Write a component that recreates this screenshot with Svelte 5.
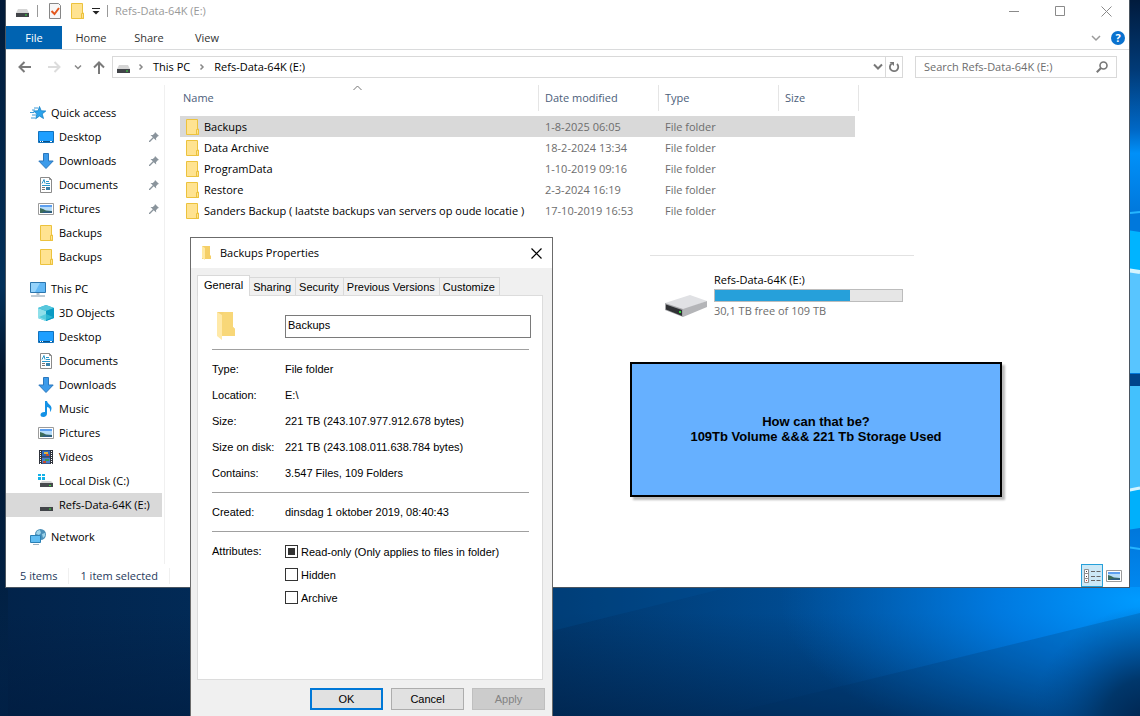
<script>
  let search = $state('')
  let folderName = $state('Backups')
  let hidden = $state(false)
  let archive = $state(false)
  let activeTab = $state('General')
  let selected = $state('Backups')

  const ribbon = ['Home', 'Share', 'View']

  const places = [
    { name: 'Quick access', icon: 'star', root: true },
    { name: 'Desktop', icon: 'desktop', pinned: true },
    { name: 'Downloads', icon: 'down', pinned: true },
    { name: 'Documents', icon: 'doc', pinned: true },
    { name: 'Pictures', icon: 'picture', pinned: true },
    { name: 'Backups', icon: 'folder' },
    { name: 'Backups', icon: 'folder' },
    { name: 'This PC', icon: 'pc', root: true, gap: true },
    { name: '3D Objects', icon: 'cube' },
    { name: 'Desktop', icon: 'desktop' },
    { name: 'Documents', icon: 'doc' },
    { name: 'Downloads', icon: 'down' },
    { name: 'Music', icon: 'music' },
    { name: 'Pictures', icon: 'picture' },
    { name: 'Videos', icon: 'video' },
    { name: 'Local Disk (C:)', icon: 'sysdisk' },
    { name: 'Refs-Data-64K (E:)', icon: 'disk', current: true },
    { name: 'Network', icon: 'network', root: true, gap: true }
  ]

  const files = [
    { name: 'Backups', date: '1-8-2025 06:05' },
    { name: 'Data Archive', date: '18-2-2024 13:34' },
    { name: 'ProgramData', date: '1-10-2019 09:16' },
    { name: 'Restore', date: '2-3-2024 16:19' },
    { name: 'Sanders Backup ( laatste backups van servers op oude locatie )', date: '17-10-2019 16:53' }
  ]

  const tabs = ['General', 'Sharing', 'Security', 'Previous Versions', 'Customize']

  const details = [
    ['Type:', 'File folder'],
    ['Location:', 'E:\\'],
    ['Size:', '221 TB (243.107.977.912.678 bytes)'],
    ['Size on disk:', '221 TB (243.108.011.638.784 bytes)'],
    ['Contains:', '3.547 Files, 109 Folders']
  ]

  const total = 109
  const free = 30.1
  const usedPercent = ((total - free) / total) * 100
</script>

{#snippet icon(name)}
  <svg class="icon" width="16" height="16" viewBox="0 0 16 16" aria-hidden="true">
    {#if name === 'folder'}
      <path d="M2.500 .5h11v9.500h1v5.500h-12z" fill="#ffe391" stroke="#ecc23d" />
      <path d="M12.500 15V10.500h2v5z" fill="#ffe391" stroke="#ecc23d" />
    {:else if name === 'star'}
      <path d="M9.500 1.500l1.700 4.300 4.600.2-3.600 2.900 1.300 4.600-4-2.500-3.800 2.700 1.200-4.700L3.500 6l4.600-.2z" fill="#2ba3ec" stroke="#1482c8" stroke-width=".8" />
      <path d="M4 3h4M2 5h3M0 7.500h4M2 10h4M1 13h4" stroke="#3c9bd8" />
    {:else if name === 'desktop'}
      <path d="M.5 2.500h15v11H.5z" fill="#1e9fff" stroke="#1272bd" />
      <path d="M1 12.500h14" stroke="#0c4f85" />
      <path d="M2 12.500h1M4 12.500h1M12 12.500h2" stroke="#fff" />
    {:else if name === 'down'}
      <path d="M5.500 .5h5v7.500h4.700L8 15.500.8 8h4.700z" fill="#3c9bea" stroke="#2a77bd" />
    {:else if name === 'doc'}
      <path d="M2.500 .5h9l2 2v13h-11z" fill="#fff" stroke="#8a8a8a" />
      <path d="M11.500 .5v2h2" fill="none" stroke="#8a8a8a" />
      <path d="M4 6.500l2-4 1 4M8 4.500h3M8 6.500h4M4 8.500h8" fill="none" stroke="#2a96c9" />
      <path d="M4 10.500h3M4 12.500h3" stroke="#777" />
      <path d="M8 10h4v3H8z" fill="#3b82ab" />
    {:else if name === 'picture'}
      <path d="M.5 2.500h15v11H.5z" fill="#fff" stroke="#9b9b9b" />
      <path d="M2 4h12v8H2z" fill="#b6dcfa" />
      <path d="M2 4h12v2H2z" fill="#5d9ff0" />
      <path d="M2 7l3 1 3 1.500 6 .5v2H2z" fill="#3d6c5b" />
      <path d="M6 10.500h8V12H4z" fill="#2c5c86" />
    {:else if name === 'pc'}
      <path d="M.5 1.500h15v10H.5z" fill="#62b8f5" stroke="#2c76ae" />
      <path d="M1 2h9L5 11H1z" fill="#95d3fb" />
      <path d="M6.500 12h3v2h-3z" fill="#b5c3ce" />
      <path d="M1 15h14" stroke="#7e98ab" />
    {:else if name === 'cube'}
      <path d="M8 0l8 3v10l-8 3-8-3V3z" fill="#1bb3d6" />
      <path d="M0 3l8 3v10l-8-3z" fill="#8fe0ea" />
      <path d="M0 3l8-3 8 3-8 3z" fill="#57c7dc" />
      <path d="M8 6l8-3v10l-8 3z" fill="#0b9bc4" />
      <path d="M1 12l7-3 7 3-7 3z" fill="#3cc3d9" opacity=".7" />
    {:else if name === 'music'}
      <path d="M7 0h2c.5 3 4.500 4 4.500 7 0 1.500-.5 3-1.500 4 .5-3-.5-4.500-3-5v6.500c0 2-1.500 3.500-3.700 3.500-1.800 0-2.800-1-2.800-2.300C2.500 12 4.500 10.800 7 11z" fill="#1492e6" />
    {:else if name === 'video'}
      <path d="M1 1h14v14H1z" fill="#30343c" />
      <path d="M4 1.500h8v6H4z" fill="#2d69bd" />
      <path d="M4 8.500h8v6H4z" fill="#4a7fcf" />
      <path d="M6 3h4v2H6z" fill="#e2b53c" />
      <path d="M8 5h3v2H8zM5 12h3v2H5z" fill="#c64b2e" />
      <path d="M7 10h4v2H7z" fill="#3c9b55" />
      <path d="M2.500 2v13M13.500 2v13" stroke="#fff" stroke-dasharray="1 1" />
    {:else if name === 'sysdisk'}
      <path d="M0 1h3v2H0zM4 1h3v2H4zM0 4h3v3H0zM4 4h3v3H4z" fill="#12b1e8" />
      <path d="M4 8h9l2 2H2z" fill="#d3d3d3" />
      <path d="M2 10h13v4H2z" fill="#474a4e" />
      <path d="M11 12h2v1h-2z" fill="#39e23c" />
    {:else if name === 'disk'}
      <path d="M4 6h9l2 4H2z" fill="#d5d5d5" />
      <path d="M2 10h13v4H2z" fill="#414448" />
      <path d="M11 11.500h2v1h-2z" fill="#39e23c" />
    {:else if name === 'network'}
      <circle cx="10.500" cy="5.500" r="5.500" fill="#4a8fb8" />
      <path d="M7 2l3-1 1 3-2 2-3-1zM12 5l3-1v3l-2 2z" fill="#9dd3ea" />
      <path d="M.5 6.500h10v7H.5z" fill="#5ebcf2" stroke="#2a80b5" />
      <path d="M3 15.500h6" stroke="#9db1bf" />
    {/if}
  </svg>
{/snippet}

{#snippet chevron(dir)}
  <svg class="icon" width="8" height="8" viewBox="0 0 8 8" aria-hidden="true">
    <path d={dir === 'right' ? 'M2.500 1.500L5 4 2.500 6.500' : 'M1 2.500L4 5.500 7 2.500'} fill="none" stroke="#888" stroke-width="1.500" />
  </svg>
{/snippet}

<div class="screen">
  <svg class="wallpaper" viewBox="0 0 1140 716" preserveAspectRatio="none" aria-hidden="true">
    <defs>
      <linearGradient id="base">
        <stop offset="0" stop-color="#02234a" />
        <stop offset=".48" stop-color="#01376c" />
        <stop offset=".75" stop-color="#00509a" />
        <stop offset="1" stop-color="#006dcb" />
      </linearGradient>
      <linearGradient id="edge" x2="0" y2="1">
        <stop offset="0" stop-color="#011b3d" />
        <stop offset=".12" stop-color="#013b78" />
        <stop offset=".22" stop-color="#0068c6" />
        <stop offset=".26" stop-color="#0090f8" />
        <stop offset=".36" stop-color="#0078dc" />
        <stop offset=".9" stop-color="#0078dc" />
        <stop offset="1" stop-color="#0088f0" />
      </linearGradient>
      <linearGradient id="left" x2="0" y2="1">
        <stop offset="0" stop-color="#011a38" />
        <stop offset=".4" stop-color="#02305a" />
        <stop offset=".52" stop-color="#01152d" />
        <stop offset="1" stop-color="#022750" />
      </linearGradient>
      <linearGradient id="fade" x2="0" y2="1">
        <stop offset=".2" stop-color="#001a3c" stop-opacity="0" />
        <stop offset="1" stop-color="#001a3c" stop-opacity=".55" />
      </linearGradient>
      <radialGradient id="glow" gradientUnits="userSpaceOnUse" cx="1140" cy="600" r="360" gradientTransform="matrix(1 0 0 .45 0 330)">
        <stop offset="0" stop-color="#009bff" />
        <stop offset=".4" stop-color="#0082ee" stop-opacity=".75" />
        <stop offset="1" stop-color="#0070d0" stop-opacity="0" />
      </radialGradient>
      <radialGradient id="corner" gradientUnits="userSpaceOnUse" cx="1150" cy="726" r="120">
        <stop offset="0" stop-color="#00224c" />
        <stop offset=".4" stop-color="#00305f" stop-opacity=".85" />
        <stop offset="1" stop-color="#004a90" stop-opacity="0" />
      </radialGradient>
    </defs>
    <path d="M0 0h1140v716H0z" fill="url(#base)" />
    <path d="M0 0h8v716H0z" fill="url(#left)" />
    <path d="M1120 0h20v590h-20z" fill="url(#edge)" />
    <path d="M1120 214l20-2" stroke="#25b5ff" stroke-width="2" />
    <path d="M1120 229l20 3v42h-20z" fill="#00b4ff" />
    <path d="M1120 271h20v102h-20z" fill="#58c5ff" />
    <path d="M1120 269l20 3" stroke="#d5f4ff" stroke-width="4" />
    <path d="M1120 374h20v12h-20z" fill="#00458c" />
    <path d="M1120 386h20v104h-20z" fill="#43c1fd" />
    <path d="M1120 490h20v38l-20 3z" fill="#00b0fb" />
    <path d="M1120 492l20-4" stroke="#d5f4ff" stroke-width="3" />
    <path d="M1120 546l20 3" stroke="#25b5ff" stroke-width="2" />
    <path d="M0 587h1140v129H0z" fill="url(#fade)" />
    <path d="M552 587h588v129H552z" fill="url(#glow)" />
    <path d="M552 631L730 587H552z" fill="#005ba6" opacity=".2" />
    <path d="M720 716L1140 613v103z" fill="#002b5c" opacity=".2" />
    <path d="M1000 587h140v129h-140z" fill="url(#corner)" />
  </svg>

  <main class="explorer">
    <header class="titlebar">
      {@render icon('disk')}
      <span class="bar"></span>
      <svg class="icon" width="14" height="16" viewBox="0 0 14 16" aria-hidden="true">
        <path d="M1.500 .5h9l2 2v13h-11z" fill="#f7f7f7" stroke="#868686" />
        <path d="M3.500 8l3 3 4.500-6" fill="none" stroke="#e3561c" stroke-width="2" />
      </svg>
      {@render icon('folder')}
      <svg class="icon caret" width="8" height="8" viewBox="0 0 8 8" aria-hidden="true">
        <path d="M0 1.500h8" stroke="#222" />
        <path d="M.5 4h7L4 7.500z" fill="#222" />
      </svg>
      <span class="bar"></span>
      <h1>Refs-Data-64K (E:)</h1>
      <div class="controls">
        <button aria-label="Minimize">
          <svg width="11" height="11" viewBox="0 0 11 11"><path d="M0 5.500h10" stroke="#8a8a8a" /></svg>
        </button>
        <button aria-label="Maximize">
          <svg width="11" height="11" viewBox="0 0 11 11"><path d="M.5 .5h9v9h-9z" fill="none" stroke="#8a8a8a" /></svg>
        </button>
        <button aria-label="Close">
          <svg width="11" height="11" viewBox="0 0 11 11"><path d="M.5 .5l10 10M10.500 .5l-10 10" stroke="#8a8a8a" /></svg>
        </button>
      </div>
    </header>

    <div class="ribbon">
      <button class="file">File</button>
      {#each ribbon as item}
        <button>{item}</button>
      {/each}
      <div class="help">
        <button aria-label="Expand the ribbon">
          <svg width="10" height="8" viewBox="0 0 10 8"><path d="M1 2l4 4 4-4" fill="none" stroke="#9a9a9a" stroke-width="1.500" /></svg>
        </button>
        <button class="round" aria-label="Help">?</button>
      </div>
    </div>

    <div class="toolbar">
      <div class="history">
        <button aria-label="Back">
          <svg width="14" height="12" viewBox="0 0 14 12"><path d="M6.500 1L1.500 6l5 5M2 6h11" fill="none" stroke="#7a7a7a" stroke-width="2" /></svg>
        </button>
        <button aria-label="Forward">
          <svg width="14" height="12" viewBox="0 0 14 12"><path d="M7.500 1l5 5-5 5M12 6H1" fill="none" stroke="#dcdcdc" stroke-width="2" /></svg>
        </button>
        <button aria-label="Recent locations">{@render chevron('down')}</button>
        <button aria-label="Up">
          <svg width="12" height="13" viewBox="0 0 12 13"><path d="M1 6.500l5-5 5 5M6 2v11" fill="none" stroke="#7a7a7a" stroke-width="2" /></svg>
        </button>
      </div>
      <div class="address">
        {@render icon('disk')}
        {@render chevron('right')}
        <a href="#this-pc">This PC</a>
        {@render chevron('right')}
        <a href="#drive">Refs-Data-64K (E:)</a>
        <button class="previous" aria-label="Previous locations">
          <svg width="10" height="8" viewBox="0 0 10 8"><path d="M1 1.500l4 4 4-4" fill="none" stroke="#777" stroke-width="2" /></svg>
        </button>
        <button class="refresh" aria-label="Refresh">
          <svg width="12" height="12" viewBox="0 0 12 12">
            <path d="M9 3a4.200 4.200 0 1 1-5.500-.3" fill="none" stroke="#777" stroke-width="1.800" />
            <path d="M1.500 1H6v4z" fill="#777" />
          </svg>
        </button>
      </div>
      <div class="search">
        <input type="text" aria-label="Search" placeholder="Search Refs-Data-64K (E:)" bind:value={search} />
        <svg width="12" height="12" viewBox="0 0 12 12" aria-hidden="true">
          <circle cx="7.500" cy="4.500" r="3.500" fill="none" stroke="#777" stroke-width="1.600" />
          <path d="M5 7L.8 11.200" stroke="#777" stroke-width="2" />
        </svg>
      </div>
    </div>

    <div class="body">
      <nav>
        {#each places as place}
          <a href="#place" class:root={place.root} class:gap={place.gap} class:current={place.current}>
            {@render icon(place.icon)}
            <span>{place.name}</span>
            {#if place.pinned}
              <svg class="pin" width="10" height="10" viewBox="0 0 10 10" aria-hidden="true">
                <path d="M6 0l4 4-1.200.2-1.800 2 .2 2.300-2.500-2.300L1 10H0V9l3.800-3.700L1.500 3l2.300.1L5.700 1.300z" fill="#8a949c" />
              </svg>
            {/if}
          </a>
        {/each}
      </nav>

      <div class="content">
        <table>
          <thead>
            <tr>
              <th class="name">
                <span>Name</span>
                <svg class="sort" width="9" height="6" viewBox="0 0 9 6" aria-hidden="true"><path d="M.5 5l4-4 4 4" fill="none" stroke="#777" /></svg>
              </th>
              <th class="date"><span>Date modified</span></th>
              <th class="type"><span>Type</span></th>
              <th class="size"><span>Size</span></th>
            </tr>
          </thead>
          <tbody>
            {#each files as file}
              <tr class:selected={selected === file.name} onclick={() => (selected = file.name)}>
                <td><div class="cell">{@render icon('folder')}{file.name}</div></td>
                <td>{file.date}</td>
                <td>File folder</td>
                <td></td>
              </tr>
            {/each}
          </tbody>
        </table>

        <section class="drive">
          <svg width="43" height="23" viewBox="0 0 43 23" aria-hidden="true">
            <path d="M0 8L25 0l17 6-24 9z" fill="#e0e1e4" />
            <path d="M18 14l24-8v6L18 22z" fill="#b4b5b8" />
            <path d="M0 8l18 6v8L0 15z" fill="#a3a4a7" />
            <path d="M1 9.500l16 5.500v6L1 14.500z" fill="#2f3134" />
            <path d="M14 16h2v2h-2z" fill="#2fdb3a" />
          </svg>
          <div class="usage">
            <div>Refs-Data-64K (E:)</div>
            <div class="meter"><div class="used" style="width: {usedPercent}%"></div></div>
            <div class="free">30,1 TB free of 109 TB</div>
          </div>
        </section>

        <aside class="note">
          <p>How can that be?</p>
          <p>109Tb Volume &amp;&amp;&amp; 221 Tb Storage Used</p>
        </aside>
      </div>
    </div>

    <footer>
      <span>5 items</span>
      <span>1 item selected</span>
      <div class="views">
        <button class="active" aria-label="Details view">
          <svg width="17" height="14" viewBox="0 0 17 14">
            <path d="M.5 .5h4v13h-4zM.5 4.500h4M.5 9.500h4" fill="#fff" stroke="#8f8f8f" />
            <path d="M2 2.500h1M2 7.500h1" stroke="#444" />
            <path d="M2 11.500h1" stroke="#c33" />
            <path d="M7 2.500h4M12.500 2.500h4M7 7.500h4M12.500 7.500h4M7 11.500h4M12.500 11.500h4" stroke="#666" />
          </svg>
        </button>
        <button aria-label="Large icons view">{@render icon('picture')}</button>
      </div>
    </footer>
  </main>

  <section class="dialog" role="dialog" aria-labelledby="dialog-title">
    <header>
      <svg width="11" height="14" viewBox="0 0 11 14" aria-hidden="true">
        <path d="M1 0h8v9l1 1v3H1z" fill="#f5cf67" />
        <path d="M1 0l3 2v12l-3-2z" fill="#ffe9a3" />
      </svg>
      <h2 id="dialog-title">Backups Properties</h2>
      <button aria-label="Close dialog">
        <svg width="11" height="11" viewBox="0 0 11 11"><path d="M.5 .5l10 10M10.500 .5l-10 10" stroke="#000" stroke-width="1.200" /></svg>
      </button>
    </header>

    <div class="tabs">
      {#each tabs as tab}
        <button class:active={activeTab === tab} onclick={() => (activeTab = tab)}>{tab}</button>
      {/each}
    </div>

    <div class="panel">
      <div class="row head">
        <svg width="20" height="30" viewBox="0 0 20 30" aria-hidden="true">
          <path d="M1 1h16v15l2 2v7H6z" fill="#f6d375" />
          <path d="M6 4l2-3h9v15l2 2v7H6z" fill="#f8d778" />
          <path d="M1 1l5 3v25l-5-4z" fill="#ffe9a8" />
        </svg>
        <input type="text" aria-label="Folder name" bind:value={folderName} />
      </div>
      <hr />
      <dl>
        {#each details as [label, value]}
          <dt>{label}</dt>
          <dd>{value}</dd>
        {/each}
      </dl>
      <hr />
      <dl>
        <dt>Created:</dt>
        <dd>dinsdag 1 oktober 2019, 08:40:43</dd>
      </dl>
      <hr />
      <div class="row attributes">
        <span>Attributes:</span>
        <div>
          <label><input type="checkbox" indeterminate={true} /> Read-only (Only applies to files in folder)</label>
          <label><input type="checkbox" bind:checked={hidden} /> Hidden</label>
          <label><input type="checkbox" bind:checked={archive} /> Archive</label>
        </div>
      </div>
    </div>

    <div class="actions">
      <button class="default">OK</button>
      <button>Cancel</button>
      <button disabled>Apply</button>
    </div>
  </section>
</div>

<style>
  :global(body) {
    margin: 0;
  }

  .screen {
    position: relative;
    min-height: 100vh;
    overflow: hidden;
    background: #01274f;
    color: #000;
    font: 11px/16px "Open Sans", "Noto Sans", sans-serif;
  }

  .screen * {
    box-sizing: border-box;
  }

  .wallpaper {
    position: absolute;
    width: 100%;
    height: 100%;
  }

  .icon {
    display: block;
    flex: none;
  }

  button {
    display: flex;
    align-items: center;
    justify-content: center;
    margin: 0;
    padding: 0;
    border: 0;
    background: none;
    color: inherit;
    font: inherit;
  }

  input {
    margin: 0;
    font: inherit;
  }

  a {
    color: inherit;
    text-decoration: none;
  }

  h1,
  h2,
  p,
  dl,
  dd {
    margin: 0;
    font-size: 11px;
    font-weight: normal;
  }

  /* explorer window */

  .explorer {
    position: absolute;
    top: 0;
    left: 6px;
    right: 11px;
    background: #fff;
    box-shadow: 0 0 0 1px #4a5560;
  }

  .titlebar {
    display: flex;
    align-items: center;
    height: 26px;
    padding: 0 0 4px 8px;
  }

  .titlebar .bar {
    width: 1px;
    height: 12px;
    margin: 0 9px 0 7px;
    background: #999;
  }

  .titlebar .icon + .icon {
    margin-left: 7px;
  }

  .titlebar .bar + .icon {
    margin-left: 1px;
  }

  .titlebar .caret + .bar {
    margin: 0 7px;
  }

  h1 {
    color: #999;
  }

  .controls {
    display: flex;
    margin-left: auto;
  }

  .controls button {
    width: 46px;
    height: 22px;
  }

  .ribbon {
    display: flex;
    height: 24px;
    border-bottom: 1px solid #dadbdc;
    color: #333;
  }

  .ribbon > button {
    width: 58px;
  }

  .ribbon > .file {
    width: 56px;
    background: #0063b1;
    color: #fff;
  }

  .help {
    display: flex;
    align-items: center;
    gap: 10px;
    margin-left: auto;
    padding-right: 4px;
  }

  .help .round {
    width: 14px;
    height: 14px;
    border-radius: 50%;
    background: #0a72cf;
    color: #fff;
    font-weight: bold;
  }

  .toolbar {
    display: flex;
    height: 35px;
    padding: 6px 12px 7px 12px;
  }

  .history {
    display: flex;
    gap: 15px;
    width: 94px;
  }

  .history button:nth-child(3) {
    margin-left: -2px;
  }

  .history button:nth-child(4) {
    margin-left: -4px;
  }

  .address {
    display: flex;
    flex: 1;
    align-items: center;
    gap: 8px;
    padding-left: 2px;
    border: 1px solid #d9d9d9;
  }

  .address .icon + .icon {
    margin-left: -2px;
  }

  .address button {
    height: 100%;
  }

  .previous {
    margin-left: auto;
  }

  .refresh {
    width: 17px;
    margin-left: -6px;
    border-left: 1px solid #d9d9d9;
  }

  .search {
    display: flex;
    align-items: center;
    width: 202px;
    margin-left: 12px;
    padding: 0 8px;
    border: 1px solid #d9d9d9;
  }

  .search input {
    flex: 1;
    min-width: 0;
    padding: 0;
    border: 0;
    outline: 0;
  }

  .search input::placeholder {
    color: #6d6d6d;
    opacity: 1;
  }

  .body {
    display: flex;
    align-items: stretch;
  }

  nav {
    flex: none;
    width: 159px;
    padding: 16px 2px 15px 0;
    border-right: 1px solid #f0f0f0;
  }

  nav a {
    display: flex;
    align-items: center;
    gap: 5px;
    height: 24px;
    padding-left: 32px;
    white-space: nowrap;
  }

  nav a.root {
    padding-left: 24px;
  }

  nav a.gap {
    margin-top: 8px;
  }

  nav a.current {
    background: #d9d9d9;
  }

  .pin {
    margin-left: auto;
    margin-right: 3px;
  }

  .content {
    flex: 1;
    min-width: 0;
    padding-left: 15px;
  }

  table {
    border-collapse: separate;
    border-spacing: 0;
    table-layout: fixed;
    width: 679px;
  }

  th {
    position: relative;
    padding: 0 0 5px;
    font-weight: normal;
    text-align: left;
    color: #4c607a;
  }

  th span {
    display: block;
    padding: 5px 6px;
    border-right: 1px solid #e5e5e5;
  }

  .name {
    width: 359px;
  }

  th.name span {
    padding-left: 3px;
  }

  .date,
  .type {
    width: 120px;
  }

  .sort {
    position: absolute;
    top: 0;
    left: 173px;
  }

  td {
    height: 21px;
    padding: 0 6px;
    color: #6d6d6d;
    white-space: nowrap;
  }

  td:last-child {
    border-right: 4px solid transparent;
    background-clip: padding-box;
  }

  .cell {
    display: flex;
    align-items: center;
    gap: 4px;
    margin-left: -2px;
    color: #000;
  }

  .selected td {
    background-color: #d9d9d9;
  }

  .drive {
    display: flex;
    align-items: center;
    gap: 6px;
    width: 264px;
    margin: 34px 0 0 470px;
    padding: 16px 11px 0 15px;
    border-top: 1px solid #e2e2e2;
  }

  .drive > svg {
    margin-top: 22px;
  }

  .usage {
    flex: 1;
  }

  .meter {
    height: 13px;
    margin: 1px 0;
    border: 1px solid #bcbcbc;
    background: #e6e6e6;
  }

  .used {
    height: 100%;
    background: #26a0da;
  }

  .free {
    color: #6d6d6d;
  }

  .note {
    display: flex;
    flex-direction: column;
    justify-content: center;
    width: 372px;
    height: 135px;
    margin: 43px 0 0 450px;
    padding-bottom: 2px;
    border: 2px solid #000;
    background: #66b0ff;
    box-shadow: 3px 3px 2px #bbb;
    font: bold 13px/15px "Liberation Sans", Arial, sans-serif;
    text-align: center;
  }

  .note p {
    font-size: 13px;
    font-weight: bold;
  }

  footer {
    display: flex;
    align-items: center;
    height: 23px;
    padding-left: 14px;
    color: #1e395b;
  }

  footer span {
    margin-right: 11px;
    padding-right: 11px;
    border-right: 1px solid #f0f0f0;
  }

  .views {
    display: flex;
    gap: 3px;
    height: 100%;
    margin-left: auto;
    padding-right: 7px;
  }

  .views .active {
    width: 22px;
    border: 1px solid #26a0da;
    background: #cce8f6;
  }

  /* properties window */

  .dialog {
    position: absolute;
    top: 237px;
    left: 190px;
    width: 363px;
    padding-bottom: 7px;
    border: 1px solid #6b6b6b;
    border-bottom: 0;
    background: #f0f0f0;
    font: 11px/16px "Liberation Sans", Arial, sans-serif;
  }

  .dialog header {
    display: flex;
    align-items: center;
    gap: 8px;
    height: 30px;
    padding: 0 10px;
    background: #fff;
    font-family: "Open Sans", "Noto Sans", sans-serif;
  }

  .dialog header button {
    margin-left: auto;
  }

  .tabs {
    display: flex;
    align-items: flex-end;
    height: 27px;
    padding-left: 6px;
  }

  .tabs button {
    height: 18px;
    padding: 0 4px 0 3px;
    border: 1px solid #d9d9d9;
    border-width: 1px 1px 0 0;
    background: #f0f0f0;
  }

  .tabs .active {
    z-index: 1;
    height: 21px;
    margin-bottom: -1px;
    padding: 0 6px 2px;
    border-left-width: 1px;
    background: #fff;
  }

  .panel {
    height: 385px;
    margin: 0 9px 0 6px;
    padding: 15px 13px 15px 14px;
    border: 1px solid #dcdcdc;
    background: #fff;
  }

  .row {
    display: grid;
    grid-template-columns: 73px 1fr;
  }

  .head {
    padding-bottom: 2px;
  }

  .head svg {
    margin-left: 4px;
  }

  .head input {
    height: 23px;
    margin: 4px -2px 0 0;
    padding: 0 2px 3px;
    border: 1px solid #7a7a7a;
  }

  hr {
    height: 1px;
    margin: 6px 0;
    border: 0;
    background: #a0a0a0;
  }

  dl {
    display: grid;
    grid-template-columns: 73px 1fr;
    line-height: 26px;
  }

  dt,
  dd {
    white-space: nowrap;
  }

  .attributes {
    margin-top: 11px;
  }

  .attributes label {
    display: flex;
    align-items: center;
    gap: 3px;
    height: 23px;
  }

  .attributes > div {
    margin-top: -3px;
  }

  input[type="checkbox"] {
    appearance: none;
    width: 13px;
    height: 13px;
    border: 1px solid #333;
    background: #fff;
  }

  input[type="checkbox"]:indeterminate,
  input[type="checkbox"]:checked {
    background: #333;
    box-shadow: inset 0 0 0 2px #fff;
  }

  .actions {
    display: flex;
    justify-content: flex-end;
    gap: 8px;
    padding: 8px 7px 0 0;
  }

  .actions button {
    width: 73px;
    height: 22px;
    border: 1px solid #adadad;
    background: #e1e1e1;
  }

  .actions .default {
    border: 2px solid #0078d7;
  }

  .actions button:disabled {
    border-color: #bfbfbf;
    background: #ccc;
    color: #838383;
  }
</style>
